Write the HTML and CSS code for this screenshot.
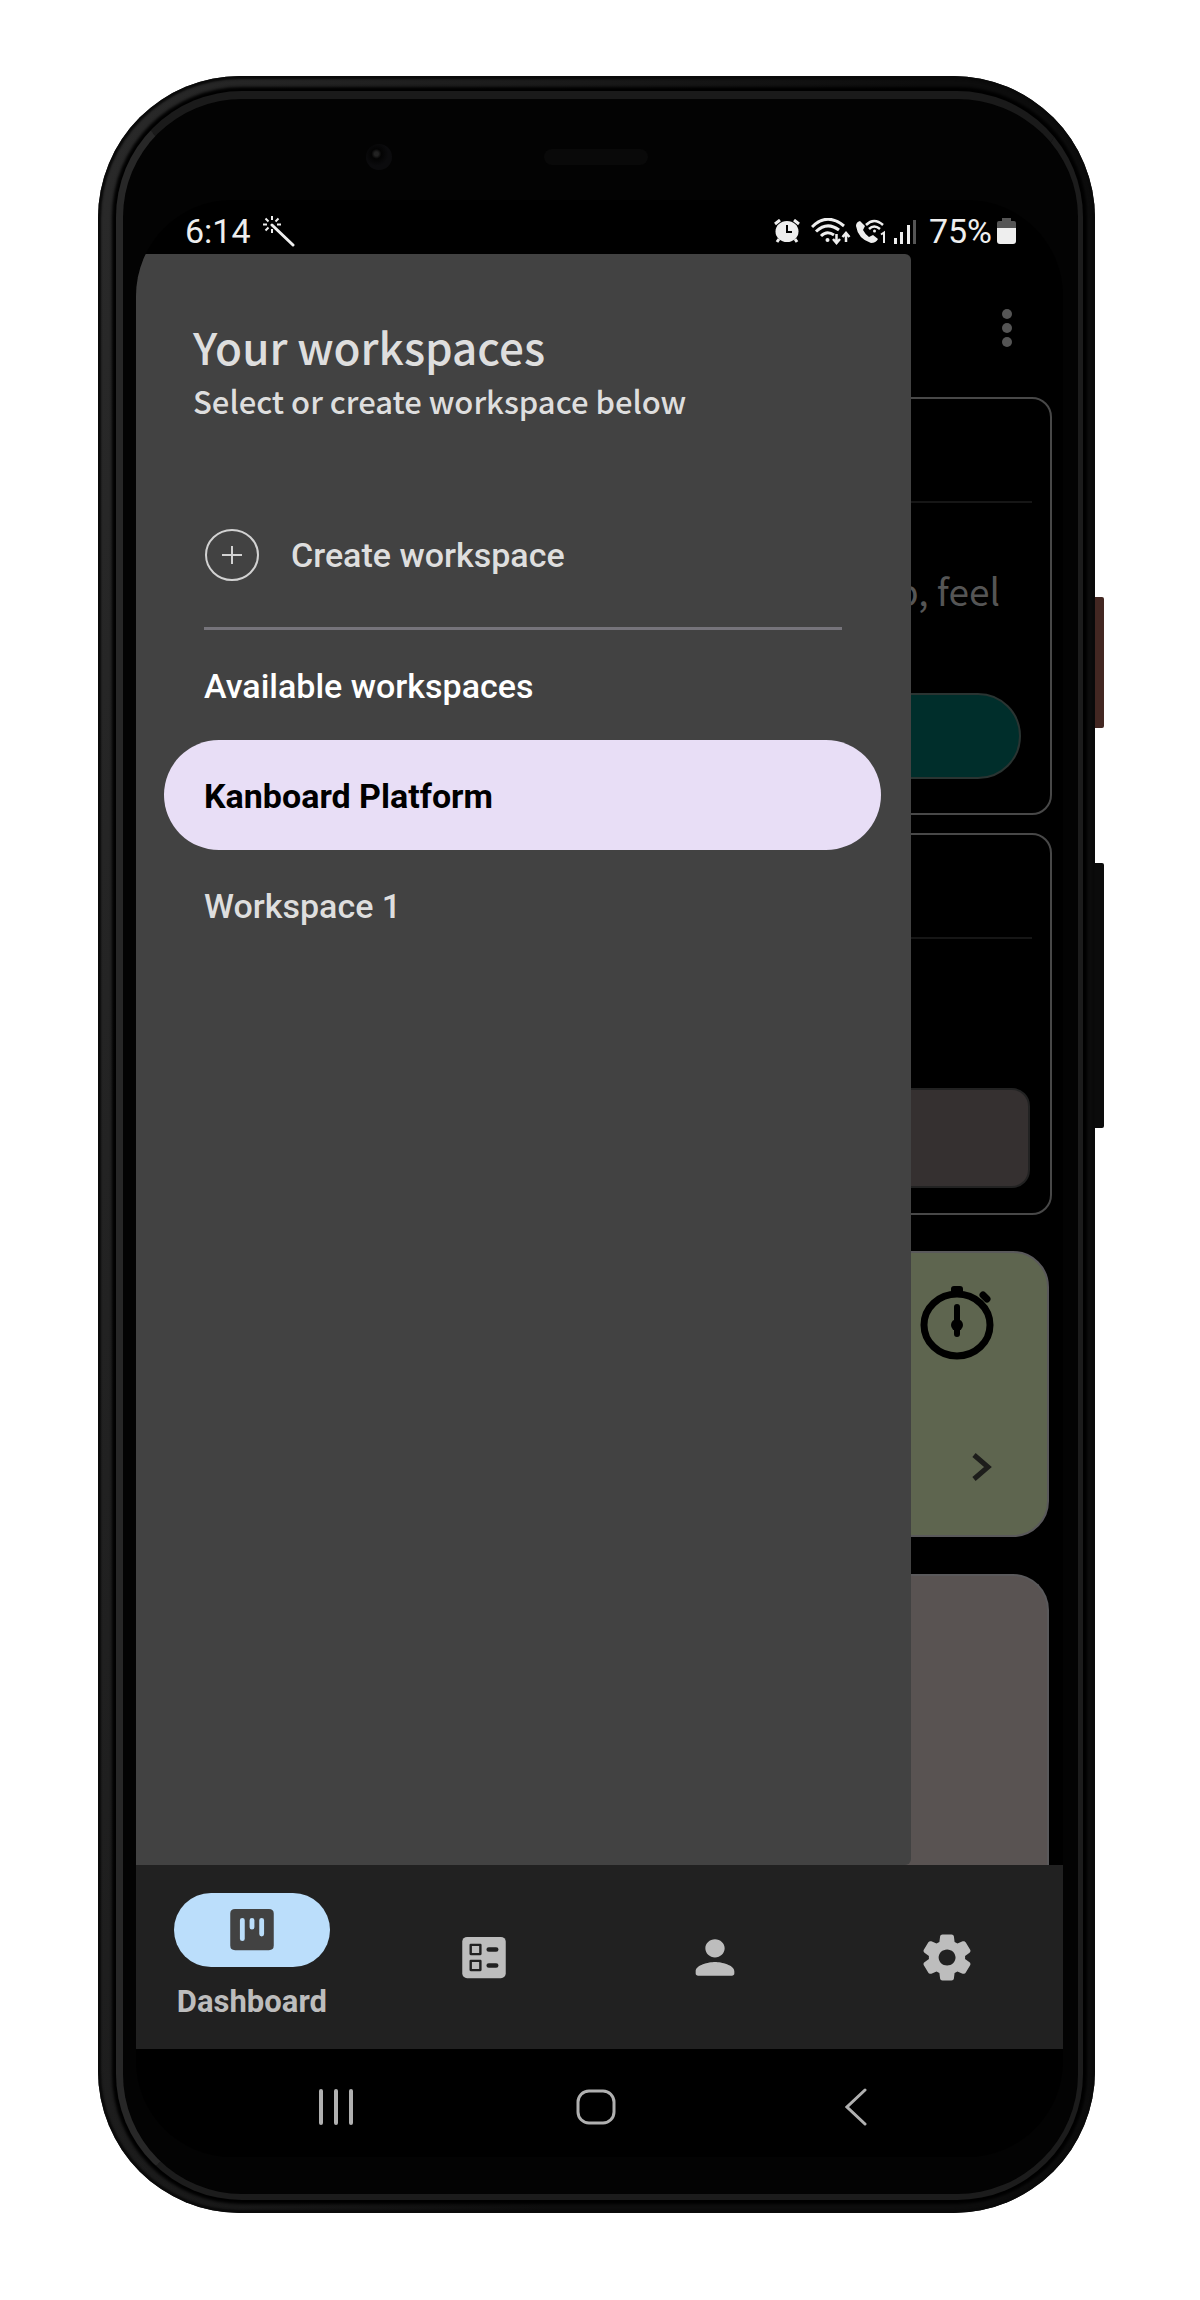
FILE: index.html
```html
<!DOCTYPE html>
<html lang="en">
<head>
<meta charset="utf-8">
<meta name="viewport" content="width=device-width, initial-scale=1">
<title>Your workspaces</title>
<link rel="stylesheet" href="styles.css">
</head>
<body>
<div class="phone">
  <span class="side-key side-key-power"></span>
  <span class="side-key side-key-volume"></span>
  <div class="sensors"><span class="camera"></span><span class="speaker"></span></div>
  <div class="screen">
    <header class="status-bar">
      <time>6:14</time>
      <svg class="wand" width="32" height="31" viewBox="0 0 32 31" fill="none" stroke="#eee" stroke-width="2">
        <path d="M9 9 L30 29" stroke-width="3" stroke-linecap="round"/>
        <path d="M9 0v4M9 13v4M0 8.500h4M14 8.500h4M2.500 2.500l3 3M15.500 2.500l-3 3M2.500 14.500l3-3"/>
      </svg>
      <div class="status-icons">
        <svg width="26" height="24" viewBox="0 0 26 24">
          <ellipse cx="13" cy="12.500" rx="11.500" ry="10.500" fill="#eee"/>
          <path d="M1 5l5-4M25 5l-5-4M5 20l-2 3M21 20l2 3" stroke="#eee" stroke-width="3" fill="none"/>
          <path d="M13 6v7h5" stroke="#000" stroke-width="2" fill="none"/>
        </svg>
        <svg class="wifi" width="40" height="27" viewBox="0 0 40 27" fill="none" stroke="#eee" stroke-width="3">
          <path d="M1 9Q16-6 33 8M5 13.500Q16 3 28 12M10 18q6-6 13-1"/>
          <circle cx="16.500" cy="22" r="2" fill="#eee" stroke="none"/>
          <path d="M25.500 16v8M22 21l3.500 4L29 21M35 24v-8M31.500 19l3.500-4 3.500 4" stroke-width="2.500"/>
        </svg>
        <svg class="call" width="31" height="25" viewBox="0 0 31 25">
          <path d="M5 2Q1 3 1 7Q3 20 16 24Q21 24 23 20L18 16L14 18Q10 15 8 11L10 7Z" fill="#eee"/>
          <path d="M11 6q8-8 17 0M14 10q5-5 11 0" fill="none" stroke="#eee" stroke-width="2.500"/>
          <circle cx="19.500" cy="12" r="1.500" fill="#eee"/>
          <path d="M26 15.500l3-2v10.500" fill="none" stroke="#eee" stroke-width="2"/>
        </svg>
        <svg class="signal" width="24" height="25" viewBox="0 0 24 25" fill="#eee">
          <path d="M1 19h3v6H1zM7 13h3v12H7zM14 6h3v19h-3z"/><path d="M20 1h3v24h-3z" fill="#555"/>
        </svg>
        <span>75%</span>
        <svg class="battery" width="19" height="26" viewBox="0 0 19 26">
          <path d="M5 0h9v3h3q2 0 2 2v6H0V5q0-2 2-2h3z" fill="#555"/><path d="M0 10h19v13q0 3-3 3H3q-3 0-3-3z" fill="#eee"/>
        </svg>
      </div>
    </header>

    <main class="app">
      <div class="toolbar">
        <button class="more" type="button" aria-label="More options">
          <svg width="12" height="38" viewBox="0 0 12 38" fill="#555"><circle cx="6" cy="5" r="5"/><circle cx="6" cy="19" r="5"/><circle cx="6" cy="33" r="5"/></svg>
        </button>
      </div>
      <section class="card card-intro">
        <div class="card-head"></div>
        <p>p, feel</p>
        <button class="action" type="button" aria-label="Open"></button>
      </section>
      <section class="card card-tasks">
        <div class="card-head"></div>
        <button class="tile" type="button" aria-label="Tasks"></button>
      </section>
      <section class="panel panel-timer">
        <svg class="stopwatch" width="74" height="76" viewBox="0 0 74 76">
          <ellipse cx="37" cy="41" rx="33" ry="31" fill="none" stroke="#000" stroke-width="7"/>
          <path d="M31 9V5q0-3 3-3h6q3 0 3 3v4zM34 23q0-3 3-3t3 3v14q4 4 0 8v5q0 3-3 3t-3-3v-5q-4-4 0-8z"/>
          <circle cx="37" cy="41" r="6"/>
          <path d="M63 11l4 4" stroke="#000" stroke-width="7" stroke-linecap="round"/>
        </svg>
        <svg class="chevron" width="20" height="28" viewBox="0 0 20 28" fill="none" stroke="#1d1d1b" stroke-width="5"><path d="M2 2l14 12L2 26"/></svg>
      </section>
      <section class="panel panel-next"></section>

      <aside class="drawer">
        <h1>Your workspaces</h1>
        <p class="hint">Select or create workspace below</p>
        <button class="item create" type="button">
          <svg width="56" height="52" viewBox="0 0 56 52" fill="none" stroke="#d2d2d2" stroke-width="2"><ellipse cx="28" cy="26" rx="26" ry="25"/><path d="M18 26h20M28 17v18"/></svg>
          Create workspace
        </button>
        <hr>
        <h2 class="item">Available workspaces</h2>
        <a class="item selected" href="#kanboard">Kanboard Platform</a>
        <a class="item" href="#workspace-1">Workspace 1</a>
      </aside>
    </main>

    <nav class="tabs">
      <a class="tab active" href="#dashboard">
        <span class="tab-pill"><svg width="58" height="55" viewBox="0 0 24 24" preserveAspectRatio="none" fill="#424242"><path fill-rule="evenodd" d="M5 3h14q2 0 2 2v14q0 2-2 2H5q-2 0-2-2V5q0-2 2-2zM8 7q-1 0-1 1v8q0 1 1 1t1-1V8q0-1-1-1zM12 7q-1 0-1 1v3q0 1 1 1t1-1V8q0-1-1-1zM16 7q-1 0-1 1v6q0 1 1 1t1-1V8q0-1-1-1z"/></svg></span>
        Dashboard
      </a>
      <a class="tab" href="#projects" aria-label="Projects">
        <svg width="58" height="55" viewBox="0 0 24 24" preserveAspectRatio="none"><rect x="3" y="3" width="18" height="18" rx="2" fill="#bdbdbd"/><path d="M6.500 6.500h4v4h-4zM6.500 13.500h4v4h-4z" fill="none" stroke="#212121" stroke-linejoin="round"/><path d="M14 8.500h3M14 15.500h3" stroke="#212121" stroke-width="2" stroke-linecap="round"/></svg>
      </a>
      <a class="tab" href="#profile" aria-label="Profile">
        <svg width="58" height="55" viewBox="0 0 24 24" preserveAspectRatio="none" fill="#bdbdbd"><path d="M12 12c2.210 0 4-1.790 4-4s-1.790-4-4-4-4 1.790-4 4 1.790 4 4 4zm0 2c-2.670 0-8 1.340-8 4v1c0 .550.450 1 1 1h14c.550 0 1-.450 1-1v-1c0-2.660-5.330-4-8-4z"/></svg>
      </a>
      <a class="tab" href="#settings" aria-label="Settings">
        <svg width="58" height="55" viewBox="0 0 24 24" preserveAspectRatio="none" fill="#bdbdbd"><path d="M19.500 12c0-.230-.010-.450-.030-.680l1.860-1.410c.400-.300.510-.860.260-1.300l-1.870-3.230c-.250-.440-.790-.620-1.250-.420l-2.150.910c-.370-.260-.760-.490-1.170-.680l-.290-2.310C14.800 2.380 14.370 2 13.870 2h-3.730c-.510 0-.940.380-1 .880l-.290 2.310c-.410.190-.800.420-1.170.680l-2.150-.910c-.460-.200-1-.020-1.250.420L2.410 8.620c-.250.440-.140.990.260 1.300l1.860 1.410c-.020.220-.030.440-.030.670s.010.450.030.680l-1.860 1.410c-.400.300-.510.860-.260 1.300l1.870 3.230c.250.440.790.620 1.250.420l2.150-.910c.370.260.760.490 1.170.680l.290 2.310c.060.500.490.880.990.880h3.730c.500 0 .930-.380.990-.880l.290-2.310c.410-.190.800-.420 1.170-.680l2.150.910c.460.200 1 .020 1.250-.420l1.870-3.230c.250-.440.140-.990-.260-1.300l-1.860-1.410c.030-.230.040-.450.040-.680zm-7.460 3.500c-1.930 0-3.500-1.570-3.500-3.500s1.570-3.500 3.500-3.500 3.500 1.570 3.500 3.500-1.570 3.500-3.500 3.500z"/></svg>
      </a>
    </nav>

    <div class="system-nav">
      <button type="button" aria-label="Recent apps"><svg width="36" height="36" viewBox="0 0 36 36" stroke="#b0b0b0" stroke-width="4" stroke-linecap="round"><path d="M3 2v32M18 2v32M33 2v32"/></svg></button>
      <button type="button" aria-label="Home"><svg width="40" height="36" viewBox="0 0 40 36"><rect x="2" y="2" width="36" height="32" rx="11" fill="none" stroke="#b0b0b0" stroke-width="3"/></svg></button>
      <button type="button" aria-label="Back"><svg width="22" height="38" viewBox="0 0 22 38" fill="none" stroke="#b0b0b0" stroke-width="3" stroke-linecap="round"><path d="M20 2L2 19l18 17"/></svg></button>
    </div>
  </div>
</div>
</body>
</html>
```
FILE: styles.css
```css
* { box-sizing: border-box; }

body {
  margin: 0;
  background: #fff;
  font-family: Roboto, "Liberation Sans", sans-serif;
  font-size: 34px;
  line-height: 40px;
  color: #eee;
}

button {
  padding: 0;
  border: 0;
  background: none;
  color: inherit;
  font: inherit;
}

a { color: inherit; text-decoration: none; }
svg { display: block; flex: none; }
h1, h2, p { margin: 0; }

/* Handset */
.phone {
  position: relative;
  display: flex;
  flex-direction: column;
  min-height: calc(100vh - 163px);
  margin: 76px 105px 87px 98px;
  padding: 0 32px 56px 38px;
  border-radius: 142px;
  background: linear-gradient(100deg, #2a2a2a, #0d0d0d 60%);
  box-shadow: inset 0 0 2px 3px #0a0a0a;
}

.phone::before {
  content: "";
  position: absolute;
  inset: 15px 12px 13px 18px;
  border: solid;
  border-width: 8px 5px 6px 7px;
  border-color: #1a1a1a #1c1c1c #1c1c1c #272727;
  border-radius: 126px;
  background: #030303;
  box-shadow: 0 0 3px 4px #000;
}

.side-key {
  position: absolute;
  right: -9px;
  width: 9px;
  border-radius: 0 2px 2px 0;
}

.side-key-power { top: 521px; height: 131px; background: #432722; }
.side-key-volume { top: 787px; height: 265px; background: #0b0b0b; }

.sensors {
  position: relative;
  display: grid;
  grid-template-columns: 1fr 104px 1fr;
  align-items: center;
  height: 124px;
  padding: 40px 8px 2px 0;
}

.camera {
  justify-self: end;
  width: 26px;
  height: 26px;
  margin-right: 152px;
  border-radius: 50%;
  background: radial-gradient(circle at 40% 38%, #222 0 2px, #030303 5px, #0b0b0d 12px);
}

.speaker { height: 16px; border-radius: 8px; background: #090909; }

.screen {
  position: relative;
  display: flex;
  flex: 1;
  flex-direction: column;
  overflow: hidden;
  border-radius: 96px;
  background: #000;
}

/* Status bar */
.status-bar {
  display: flex;
  align-items: center;
  height: 54px;
  padding: 8px 47px 0 49px;
}

.wand { margin-left: 12px; }
.status-icons { display: flex; align-items: center; margin-left: auto; }
.wifi { margin-left: 11px; }
.call { margin-left: 4px; }
.signal { margin: 0 12px 0 7px; }
.battery { margin-left: 5px; }

/* Dashboard behind the drawer */
.app {
  position: relative;
  display: flex;
  flex: 1;
  flex-direction: column;
  padding: 0 11px;
}

.toolbar { display: flex; justify-content: flex-end; height: 143px; padding: 55px 39px 0; }
.more { height: 38px; }

.card {
  display: flex;
  flex-direction: column;
  margin-bottom: 18px;
  border: 2px solid #484848;
  border-radius: 20px;
}

.card-head { height: 104px; margin: 0 18px; border-bottom: 2px solid #161616; }

.card-intro { height: 418px; }
.card-intro p {
  padding: 64px 50px 0;
  font-family: "Noto Sans CJK SC", sans-serif;
  font-size: 37px;
  line-height: 46px;
  text-align: right;
  color: #555;
}

.action {
  height: 86px;
  margin: auto 29px 34px;
  border: 2px solid #2a3432;
  border-radius: 43px;
  background: #002e2b;
}

.card-tasks { height: 382px; margin-bottom: 36px; }

.tile {
  height: 100px;
  margin: auto 20px 25px;
  border: 2px solid #222;
  border-radius: 18px;
  background: #353030;
}

.panel {
  display: flex;
  flex-direction: column;
  align-items: flex-end;
  justify-content: space-between;
  height: 286px;
  margin: 0 3px 37px;
  border: 2px solid #5a595b;
  border-radius: 36px;
}

.panel-timer { padding: 31px 53px 54px; background: #5e654f; }
.chevron { margin-right: 2px; }

.panel-next {
  flex: 1 0 200px;
  height: auto;
  margin-bottom: 0;
  border-bottom: 0;
  border-radius: 36px 36px 0 0;
  background: #595352;
}

/* Drawer */
.drawer {
  position: absolute;
  inset: 0 152px 0 0;
  display: flex;
  flex-direction: column;
  padding: 62px 30px 0 28px;
  border-radius: 0 6px 6px 0;
  background: #424242;
  color: #dedede;
}

.drawer h1, .hint {
  padding-left: 29px;
  font-family: "Noto Sans CJK SC", sans-serif;
  font-weight: 500;
}

.drawer h1 { font-size: 44px; line-height: 60px; }
.hint { margin-bottom: 73px; font-size: 31px; line-height: 50px; }

.item {
  display: flex;
  align-items: center;
  height: 110px;
  padding: 2px 40px 0;
  border-radius: 55px;
  font-size: 34px;
  font-weight: 500;
}

.create { gap: 31px; }
.create svg { overflow: visible; }
.drawer hr { width: calc(100% - 79px); height: 3px; margin: 18px 0 0 40px; border: 0; background: #76747b; }
h2.item { color: #fff; }
.selected { background: #e8def6; color: #000; font-weight: 700; }

/* App tabs */
.tabs {
  display: grid;
  grid-template-columns: repeat(4, 1fr);
  height: 184px;
  background: #212121;
}

.tab {
  display: flex;
  flex-direction: column;
  align-items: center;
  justify-content: center;
  color: #bdbdbd;
  font-size: 31px;
  font-weight: 700;
}

.tab-pill {
  display: grid;
  place-items: center;
  width: 156px;
  height: 74px;
  margin-bottom: 15px;
  border-radius: 37px;
  background: #bbdefb;
}

/* System buttons */
.system-nav {
  display: grid;
  grid-template-columns: repeat(3, 1fr);
  place-items: center;
  height: 108px;
  padding: 8px 77px 0 70px;
}
```
